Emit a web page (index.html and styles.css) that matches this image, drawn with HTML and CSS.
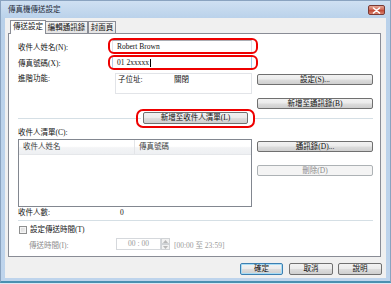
FILE: index.html
```html
<!DOCTYPE html>
<html lang="zh-Hant">
<head>
<meta charset="utf-8">
<title>傳真機傳送設定</title>
<link rel="stylesheet" href="styles.css">
</head>
<body>
<div class="window">
  <div class="titlebar">
    <span class="title">傳真機傳送設定</span>
    <span class="close"><svg width="9" height="7" viewBox="0 0 9 7"><path d="M1.5 1 L7.5 6 M7.5 1 L1.5 6" stroke="#fff" stroke-width="1.6" stroke-linecap="round"/></svg></span>
  </div>
  <div class="client">
    <div class="tabs">
      <div class="tab active">傳送設定</div>
      <div class="tab t2">編輯通訊錄</div>
      <div class="tab t3">封面頁</div>
    </div>
    <div class="panel">
      <div class="row r1">
        <span class="lbl">收件人姓名(N):</span>
        <div class="field annot a1">Robert Brown</div>
      </div>
      <div class="row r2">
        <span class="lbl">傳真號碼(X):</span>
        <div class="field focus annot a2">01 2xxxxx<span class="caret"></span></div>
      </div>
      <div class="row r3">
        <div class="leftcol adv">
          <span class="lbl lbl-adv">進階功能:</span>
          <div class="advbox"><span class="sub">子位址:</span><span>關閉</span></div>
        </div>
        <div class="rightcol"><div class="btn">設定(S)...</div></div>
      </div>
      <div class="row r4">
        <div class="rightcol push"><div class="btn">新增至通訊錄(B)</div></div>
      </div>
      <div class="row r5">
        <span class="line l-left"></span>
        <div class="btn addlist annot a3">新增至收件人清單(L)</div>
        <span class="line l-right"></span>
      </div>
      <div class="row r6"><span>收件人清單(C):</span></div>
      <div class="row r7">
        <div class="listbox">
          <div class="lhead">
            <span class="hcol c1">收件人姓名</span>
            <span class="hcol c2">傳真號碼</span>
          </div>
        </div>
        <div class="rightcol stack">
          <div class="btn">通訊錄(D)...</div>
          <div class="btn disabled">刪除(D)</div>
        </div>
      </div>
      <div class="row r8"><span class="cntlbl">收件人數:</span><span>0</span></div>
      <div class="hsep"></div>
      <div class="row r10"><span class="check"></span><span>設定傳送時間(T)</span></div>
      <div class="row r11">
        <span class="timelbl">傳送時間(I):</span>
        <div class="timefield">00&nbsp;:&nbsp;00</div>
        <div class="spin">
          <span class="sp up"><svg width="5" height="3" viewBox="0 0 5 3"><path d="M0 3 L2.5 0 L5 3 Z" fill="#b8b8b8"/></svg></span>
          <span class="sp dn"><svg width="5" height="3" viewBox="0 0 5 3"><path d="M0 0 L2.5 3 L5 0 Z" fill="#b8b8b8"/></svg></span>
        </div>
        <span class="range">[00:00 至 23:59]</span>
      </div>
    </div>
    <div class="footer">
      <div class="btn fbtn default">確定</div>
      <div class="btn fbtn">取消</div>
      <div class="btn fbtn">說明</div>
    </div>
  </div>
</div>
</body>
</html>
```
FILE: styles.css
```css
* { box-sizing: border-box; }
html, body { margin: 0; padding: 0; }
body {
  width: 391px;
  height: 284px;
  overflow: hidden;
  background: #dce8f4;
  font-family: "Liberation Serif", "Noto Sans CJK TC", serif;
  font-size: 7.5px;
  color: #111;
}
.window {
  width: 391px;
  height: 283px;
  display: flex;
  flex-direction: column;
  background: linear-gradient(#cfe0f2, #b9d1ea 18px, #bed4ec);
  border: 1px solid #8aa3c0;
  border-bottom: 2px solid #4a90b0;
  padding: 0 4px 3px 4px;
}
.titlebar {
  height: 17px;
  display: flex;
  align-items: center;
  padding-left: 3px;
}
.title { color: #1e2a38; line-height: 10px; }
.close {
  margin-left: auto;
  margin-right: 1px;
  margin-top: 1px;
  width: 17px;
  height: 10px;
  border: 1px solid #7a3a34;
  border-radius: 2px;
  background: linear-gradient(#e6a796, #cf6a58 45%, #c24a36 55%, #d9826e);
  display: flex;
  align-items: center;
  justify-content: center;
}
.close svg { display: block; }
.client {
  flex: 1;
  background: #f0f0f0;
  padding: 2px 5px 0 3px;
  display: flex;
  flex-direction: column;
}
.tabs {
  display: flex;
  align-items: flex-end;
  height: 14px;
  margin-left: 2px;
  margin-bottom: -1px;
  position: relative;
  z-index: 1;
}
.tab {
  height: 12px;
  border: 1px solid #898c95;
  border-bottom: none;
  background: linear-gradient(#f4f4f4, #e4e4e4);
  text-align: center;
  line-height: 11px;
  margin-bottom: 1px;
}
.tab.active {
  width: 36px;
  height: 14px;
  background: #fff;
  line-height: 12px;
  margin-bottom: 0;
  border-bottom: none;
}
.tab.t2 { width: 43px; margin-left: -1px; }
.tab.t3 { width: 28px; margin-left: 0; }
.panel {
  height: 224px;
  background: #fff;
  border: 1px solid #898c95;
  padding: 6px 7px 0 9px;
  display: flex;
  flex-direction: column;
}
.row { display: flex; align-items: center; }
.lbl { width: 94px; flex: none; }
.field {
  position: relative;
  width: 140px;
  height: 13px;
  border: 1px solid;
  border-color: #abadb3 #dbdfe6 #e3e9ef #e2e3ea;
  background: #fff;
  padding-left: 4px;
  line-height: 11px;
  display: flex;
  align-items: center;
}
.field.focus { border-color: #3d7bad #a4c9e3 #b7d9ed #b5cfe7; }
.caret { display: inline-block; width: 1px; height: 8px; background: #000; margin-left: 1px; }
.annot::after {
  content: "";
  position: absolute;
  border: 2px solid #ee0000;
  border-radius: 6px;
  pointer-events: none;
}
.a1::after { left: -5px; right: -7px; top: -3px; bottom: -2px; }
.a2::after { left: -5px; right: -7px; top: -2px; bottom: -2px; }
.r2 { margin-top: 3px; height: 13px; }
.r1 { height: 13px; }
.r3 { margin-top: 4px; height: 21px; align-items: flex-start; }
.leftcol { width: 234px; display: flex; flex: none; }
.adv { align-items: flex-start; height: 21px; }
.lbl-adv { width: 97px; line-height: 10px; padding-top: 1px; }
.advbox {
  width: 137px;
  height: 21px;
  border: 1px solid #e2e4e8;
  display: flex;
  padding: 1px 2px;
  line-height: 10px;
}
.sub { width: 56px; }
.rightcol { width: 116px; margin-left: 5px; flex: none; }
.rightcol.push { margin-left: auto; }
.r3 .rightcol { margin-top: 1px; }
.btn {
  height: 11px;
  border: 1px solid #707070;
  border-radius: 2px;
  background: linear-gradient(#f2f2f2 0%, #ebebeb 48%, #dddddd 52%, #cfcfcf 100%);
  text-align: center;
  line-height: 9px;
  white-space: nowrap;
}
.btn.disabled {
  border-color: #adb2b5;
  background: #f4f4f4;
  color: #8b8b8b;
}
.r4 { margin-top: 4px; }
.r5 { margin-top: 3px; height: 12px; }
.line { height: 1px; background: #d5dfe5; flex: none; }
.l-left { width: 123px; }
.l-right { width: 118px; }
.btn.addlist {
  position: relative;
  width: 105px;
  height: 12px;
  line-height: 10px;
  margin: 0 7px 0 2px;
}
.a3::after { left: -8px; right: -8px; top: -4px; bottom: -5px; border-radius: 7px; }
.r6 { margin-top: 4px; height: 10px; line-height: 10px; }
.r7 { margin-top: 1px; align-items: flex-start; }
.listbox {
  width: 234px;
  height: 68px;
  flex: none;
  border: 1px solid #828790;
  background: #fff;
}
.lhead {
  height: 15px;
  display: flex;
  background: linear-gradient(#ffffff 0, #ffffff 45%, #f3f4f6 55%, #eef0f3 100%);
  border-bottom: 1px solid #e5e7ea;
  line-height: 14px;
}
.hcol { padding-left: 4px; color: #3c3c3c; }
.hcol.c1 { width: 116px; border-right: 1px solid #e3e5e8; }
.stack { display: flex; flex-direction: column; margin-top: 2px; }
.stack .disabled { margin-top: 13px; }
.r8 { margin-top: 1px; height: 10px; line-height: 10px; }
.cntlbl { width: 102px; }
.hsep { height: 1px; background: #d5dfe5; margin-top: 2px; }
.r10 { margin-top: 4px; height: 10px; line-height: 10px; }
.check {
  width: 8px;
  height: 8px;
  margin-left: 1px;
  margin-right: 3px;
  border: 1px solid #8e8f8f;
  background: linear-gradient(135deg, #d6d6d6, #f4f4f4);
  box-shadow: inset 0 0 0 1px #f4f4f4;
}
.r11 { margin-top: 3px; height: 12px; color: #8d8d8d; }
.timelbl { width: 87px; margin-left: 11px; }
.timefield {
  width: 45px;
  height: 12px;
  border: 1px solid #d5d8dc;
  background: #fff;
  text-align: center;
  line-height: 10px;
  color: #999;
}
.spin { width: 9px; height: 12px; display: flex; flex-direction: column; }
.sp {
  flex: 1;
  border: 1px solid #d0d3d6;
  background: #f2f2f2;
  display: flex;
  align-items: center;
  justify-content: center;
}
.sp svg { display: block; }
.range { margin-left: 4px; color: #9a9a9a; }
.footer {
  display: flex;
  justify-content: flex-end;
  gap: 5px;
  margin-top: 6px;
  margin-right: -1px;
}
.fbtn { width: 44px; height: 12px; line-height: 10px; }
.fbtn.default {
  width: 43px;
  border-color: #3c7fb1;
  box-shadow: inset 0 0 0 1px #a8dcf5;
  margin-right: 1px;
}
```
